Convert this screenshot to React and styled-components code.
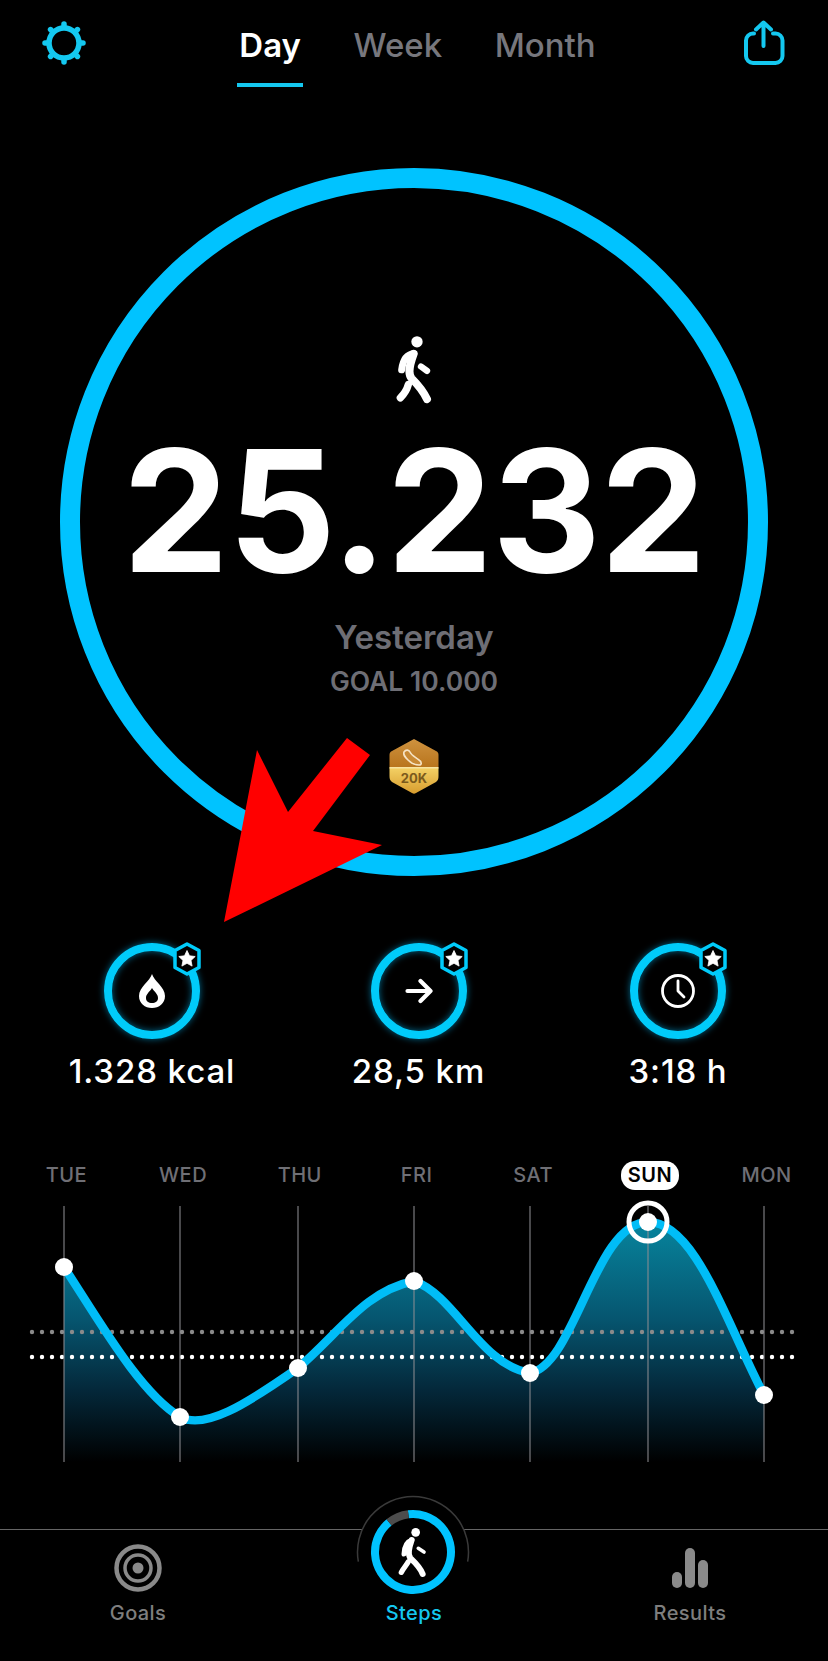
import React from "react";
import styled, { createGlobalStyle } from "styled-components";

const CYAN = "#00c3ff";
const TEAL = "#14c8f0";

const GlobalStyle = createGlobalStyle`
  html, body {
    margin: 0;
    padding: 0;
    background: #000;
  }
  body {
    font-family: Inter, "Liberation Sans", sans-serif;
    color: #fff;
  }
`;

const Page = styled.div`
  position: relative;
  width: 828px;
  height: 1661px;
  background: #000;
  overflow: hidden;
`;

const TopBar = styled.header`
  display: flex;
  align-items: flex-start;
  justify-content: space-between;
  height: 168px;
  box-sizing: border-box;
  padding: 20px 42px 0 42px;
`;

const Tabs = styled.nav`
  display: flex;
  gap: 48.5px;
  margin-left: 5px;
`;

const Tab = styled.div`
  position: relative;
  height: 67px;
  box-sizing: border-box;
  padding: 6px 2px 0;
  font-size: 33px;
  line-height: 38px;
  font-weight: ${(p) => (p.$active ? 600 : 500)};
  color: ${(p) => (p.$active ? "#fff" : "#77777d")};
  border-bottom: 4px solid ${(p) => (p.$active ? TEAL : "transparent")};
`;

const Hero = styled.section`
  width: 708px;
  height: 708px;
  margin: 0 auto;
  box-sizing: border-box;
  border: 20px solid ${CYAN};
  border-radius: 50%;
  display: flex;
  flex-direction: column;
  align-items: center;
  padding-top: 147px;
`;

const StepCount = styled.div`
  margin-top: 12px;
  font-size: 169px;
  line-height: 190px;
  font-weight: 700;
  letter-spacing: -1px;
  color: #fff;
`;

const Caption = styled.div`
  margin-top: 11px;
  font-size: 33px;
  line-height: 40px;
  font-weight: 600;
  color: #6e6e75;
`;

const Goal = styled.div`
  margin-top: 8px;
  font-size: 26.5px;
  line-height: 32px;
  font-weight: 600;
  color: #6e6e75;
`;

const MedalWrap = styled.div`
  margin-top: 41px;
  height: 56px;
`;

const Stats = styled.section`
  display: grid;
  grid-template-columns: 304px 229px 290px;
  margin-top: 67px;
`;

const Stat = styled.div`
  display: flex;
  flex-direction: column;
  align-items: center;
`;

const StatRing = styled.div`
  position: relative;
  width: 96px;
  height: 96px;
  box-sizing: border-box;
  border: 8px solid #00cbfa;
  border-radius: 50%;
  display: flex;
  align-items: center;
  justify-content: center;
  box-shadow: 0 0 7px rgba(0, 190, 255, 0.55), inset 0 0 7px rgba(0, 190, 255, 0.55);
`;

const StarBadge = styled.svg`
  position: absolute;
  top: -9px;
  right: -11px;
  width: 32px;
  height: 34px;
`;

const StatValue = styled.div`
  margin-top: 12px;
  margin-bottom: 1px;
  font-size: 33px;
  line-height: 40px;
  font-weight: 500;
  letter-spacing: 0.9px;
  color: #fff;
  white-space: nowrap;
`;

const DayRow = styled.div`
  display: grid;
  grid-template-columns: repeat(7, 1fr);
  justify-items: center;
  align-items: center;
  height: 29px;
  margin-top: 69px;
  padding: 0 3px 0 8px;
`;

const Day = styled.div`
  font-size: 20px;
  line-height: 29px;
  letter-spacing: 0.5px;
  padding: 0 ${(p) => (p.$active ? "7px" : "0")};
  border-radius: 14px;
  color: ${(p) => (p.$active ? "#000" : "#6f6f75")};
  background: ${(p) => (p.$active ? "#fff" : "transparent")};
  font-weight: ${(p) => (p.$active ? 600 : 500)};
`;

const Chart = styled.svg`
  display: block;
  width: 828px;
  height: 280px;
  margin-top: 5px;
`;

const TabBar = styled.nav`
  display: grid;
  grid-template-columns: repeat(3, 1fr);
  margin-top: 54px;
  border-top: 1px solid #666;
  padding-top: 14px;
`;

const NavItem = styled.div`
  display: flex;
  flex-direction: column;
  align-items: center;
`;

const NavIcon = styled.svg`
  display: block;
  width: 48px;
  height: 48px;
`;

const StepsButton = styled.svg`
  display: block;
  width: 120px;
  height: 104px;
  margin-top: -52px;
  margin-bottom: -4px;
`;

const NavLabel = styled.div`
  margin-top: 9px;
  font-size: 20px;
  line-height: 24px;
  font-weight: 500;
  letter-spacing: 0.4px;
  color: ${(p) => (p.$active ? TEAL : "#7e7e7e")};
`;

const Annotation = styled.svg`
  position: absolute;
  left: 0;
  top: 0;
  width: 828px;
  height: 1661px;
  pointer-events: none;
`;

const GearIcon = () => {
  const teeth = [0, 45, 90, 135, 180, 225, 270, 315];
  return (
    <svg width="44" height="46" viewBox="-22 -23 44 46" fill="none" stroke={TEAL}>
      <circle r="15" strokeWidth="5.5" />
      {teeth.map((a) => (
        <line key={a} x1="0" y1="-16.500" x2="0" y2="-19" strokeWidth="5.500" strokeLinecap="round" transform={`rotate(${a})`} />
      ))}
    </svg>
  );
};

const ShareIcon = () => (
  <svg width="42" height="46" viewBox="0 0 42 46" fill="none" stroke={TEAL} strokeWidth="4" strokeLinecap="round" strokeLinejoin="round">
    <path d="M10 13.500H9a7 7 0 0 0-7 7V36a7 7 0 0 0 7 7H31.500a7 7 0 0 0 7-7V20.500a7 7 0 0 0-7-7H29" />
    <path d="M19.500 26V3M12 9.500L19.500 2.500L27 9.500" />
  </svg>
);

const Walker = () => (
  <svg width="36" height="69" viewBox="585 42 108 206" fill="none" stroke="#fff" strokeLinecap="round" strokeLinejoin="round">
    <circle cx="648" cy="62" r="17" fill="#fff" stroke="none" />
    <path d="M638 98C616 100 606 115 602 146" strokeWidth="21" />
    <path d="M638 98C628 125 618 155 632 172C650 190 668 212 678 234" strokeWidth="24" />
    <path d="M622 190C618 205 610 218 598 230" strokeWidth="22" />
    <path d="M660 136L678 149" strokeWidth="19" />
  </svg>
);

const Medal = () => (
  <svg width="50" height="56" viewBox="0 0 50 56">
    <defs>
      <linearGradient id="medalTop" x1="0" y1="0" x2="0" y2="1">
        <stop offset="0" stopColor="#cf9340" />
        <stop offset="1" stopColor="#b8741c" />
      </linearGradient>
      <linearGradient id="medalBottom" x1="0" y1="0" x2="0" y2="1">
        <stop offset="0" stopColor="#f3d064" />
        <stop offset="1" stopColor="#d79c2e" />
      </linearGradient>
      <clipPath id="medalHex">
        <path d="M25 1L47 13C49 14 49.500 15 49.500 17V38C49.500 41 49 42 47 44L27 55C25.500 56 24.500 56 23 55L3 44C1 42 .5 41 .5 38V17C.5 15 1 14 3 13Z" />
      </clipPath>
    </defs>
    <g clipPath="url(#medalHex)">
      <rect width="50" height="30" fill="url(#medalTop)" />
      <rect y="30" width="50" height="26" fill="url(#medalBottom)" />
      <rect y="29" width="50" height="1.500" fill="#f7e3a0" />
      <path d="M15 14C17 11 20 12 21 14C22 17 26 19 30 22C33 24 33 27 30 27C26 27 22 25 19 22C16 19 14 17 15 14Z" fill="#c98a35" stroke="#f6e3c4" strokeWidth="1.600" />
      <text x="25" y="45" textAnchor="middle" fontSize="13" fontWeight="700" fontFamily="Inter, sans-serif" fill="#7b5a1c">20K</text>
    </g>
  </svg>
);

const Star = () => (
  <StarBadge viewBox="0 0 32 34">
    <path d="M16 2L28 8.500V25.500L16 32L4 25.500V8.500Z" fill="#000" stroke="#00cbfa" strokeWidth="3.500" strokeLinejoin="round" />
    <path d="M16 8.500l2.500 5.300 5.700.7-4.200 3.900 1.100 5.700-5.100-2.800-5.100 2.800 1.100-5.700-4.200-3.900 5.700-.7z" fill="#fff" stroke="#fff" strokeWidth=".8" strokeLinejoin="round" />
  </StarBadge>
);

const FlameIcon = () => (
  <svg width="28" height="36" viewBox="0 0 28 36">
    <path fillRule="evenodd" fill="#fff" d="M14 1C16 8 27 14 27 23C27 30.500 21 35 14 35C7 35 1 30.500 1 23C1 14 12 8 14 1ZM14 15C11.500 19 8 21 8 25C8 28.500 10.500 30 14 30C17.500 30 20 28.500 20 25C20 21 16.500 19 14 15Z" />
  </svg>
);

const ArrowIcon = () => (
  <svg width="28" height="26" viewBox="0 0 28 26" fill="none" stroke="#fff" strokeWidth="4.200" strokeLinecap="round" strokeLinejoin="round">
    <path d="M2.500 13H25M15.500 3L25.500 13L15.500 23" />
  </svg>
);

const ClockIcon = () => (
  <svg width="34" height="34" viewBox="0 0 34 34" fill="none" stroke="#fff" strokeWidth="2.800" strokeLinecap="round" strokeLinejoin="round">
    <circle cx="17" cy="17" r="15.500" />
    <path d="M17 7V17L23 23" />
  </svg>
);

const DAYS = ["TUE", "WED", "THU", "FRI", "SAT", "SUN", "MON"];

// x/y of each day in page coordinates, the chart's viewBox starts at y=1195
const POINTS = [
  [64, 1267],
  [180, 1417],
  [298, 1368],
  [414, 1281],
  [530, 1373],
  [648, 1222],
  [764, 1395],
];

const CURVE =
  "M64 1267C100 1322 140 1393 180 1417C205 1430 245 1405 298 1368C340 1332 365 1291 414 1281C455 1295 480 1365 530 1373C575 1365 595 1222 648 1222C695 1222 725 1320 764 1395";

const StepsChart = () => (
  <Chart viewBox="0 1195 828 280">
    <defs>
      <linearGradient id="areaFill" gradientUnits="userSpaceOnUse" x1="0" y1="1222" x2="0" y2="1462">
        <stop offset="0" stopColor="#07849d" />
        <stop offset="0.4" stopColor="#065670" />
        <stop offset="0.7" stopColor="#04283a" />
        <stop offset="1" stopColor="#000" />
      </linearGradient>
    </defs>
    <path d={`${CURVE}V1462H64Z`} fill="url(#areaFill)" />
    <line x1="32" x2="796" y1="1332" y2="1332" stroke="#8a8a8a" strokeWidth="4.400" strokeDasharray="0 10" strokeLinecap="round" />
    <line x1="32" x2="796" y1="1357" y2="1357" stroke="#fff" strokeWidth="4.400" strokeDasharray="0 10" strokeLinecap="round" />
    {POINTS.map(([x]) => (
      <line key={x} x1={x} x2={x} y1="1206" y2="1462" stroke="#8d8d92" strokeOpacity="0.65" strokeWidth="1.600" />
    ))}
    <path d={CURVE} fill="none" stroke="#00bdf7" strokeWidth="8.500" />
    {POINTS.map(([x, y]) => (
      <circle key={x} cx={x} cy={y} r="9" fill="#fff" />
    ))}
    <circle cx="648" cy="1222" r="19" fill="none" stroke="#fff" strokeWidth="5" />
  </Chart>
);

const GoalsIcon = () => (
  <NavIcon viewBox="0 0 48 48" fill="none" stroke="#8a8a8a">
    <circle cx="24" cy="24" r="21.500" strokeWidth="4.500" />
    <circle cx="24" cy="24" r="13" strokeWidth="3.500" />
    <circle cx="24" cy="24" r="5.500" fill="#8a8a8a" stroke="none" />
  </NavIcon>
);

const ResultsIcon = () => (
  <NavIcon viewBox="0 0 48 48" fill="#8a8a8a">
    <rect x="6" y="28" width="10" height="16" rx="5" />
    <rect x="19" y="4" width="10" height="40" rx="5" />
    <rect x="32" y="16" width="10" height="28" rx="5" />
  </NavIcon>
);

// ring angles are measured clockwise from 12 o'clock
const polar = (r, deg) => {
  const rad = (deg * Math.PI) / 180;
  return [59 + r * Math.sin(rad), 60 - r * Math.cos(rad)];
};

const arc = (r, from, to) => {
  const [x1, y1] = polar(r, from);
  const [x2, y2] = polar(r, to);
  const large = to - from > 180 ? 1 : 0;
  return `M${x1} ${y1}A${r} ${r} 0 ${large} 1 ${x2} ${y2}`;
};

const StepsIcon = () => (
  <StepsButton viewBox="0 0 120 104" fill="none">
    <path d={arc(55.5, -100, 100)} fill="#000" stroke="#3a3a3a" strokeWidth="1.500" />
    <circle cx="59" cy="60" r="46" fill="#000" />
    <path d={arc(38, -7, 321)} stroke={CYAN} strokeWidth="8" />
    <path d={arc(38, 321, 353)} stroke="#4d4d4d" strokeWidth="8" />
    <g transform="translate(59 60) scale(0.3333) translate(-1059 -216)" stroke="#fff" strokeLinecap="round" strokeLinejoin="round">
      <circle cx="1067" cy="157" r="13" fill="#fff" stroke="none" />
      <path d="M1055 180C1040 185 1033 195 1032 222" strokeWidth="15" />
      <path d="M1055 180C1048 200 1042 225 1052 235C1068 250 1082 265 1088 282" strokeWidth="18" />
      <path d="M1045 245C1040 255 1030 265 1024 277" strokeWidth="16" />
      <path d="M1075 205L1092 216" strokeWidth="11" />
    </g>
  </StepsButton>
);

export default function App() {
  return (
    <Page>
      <GlobalStyle />
      <TopBar>
        <GearIcon />
        <Tabs>
          <Tab $active>Day</Tab>
          <Tab>Week</Tab>
          <Tab>Month</Tab>
        </Tabs>
        <ShareIcon />
      </TopBar>

      <Hero>
        <Walker />
        <StepCount>25.232</StepCount>
        <Caption>Yesterday</Caption>
        <Goal>GOAL 10.000</Goal>
        <MedalWrap>
          <Medal />
        </MedalWrap>
      </Hero>

      <Stats>
        <Stat>
          <StatRing>
            <FlameIcon />
            <Star />
          </StatRing>
          <StatValue>1.328 kcal</StatValue>
        </Stat>
        <Stat>
          <StatRing>
            <ArrowIcon />
            <Star />
          </StatRing>
          <StatValue>28,5 km</StatValue>
        </Stat>
        <Stat>
          <StatRing>
            <ClockIcon />
            <Star />
          </StatRing>
          <StatValue>3:18 h</StatValue>
        </Stat>
      </Stats>

      <DayRow>
        {DAYS.map((d) => (
          <Day key={d} $active={d === "SUN"}>
            {d}
          </Day>
        ))}
      </DayRow>
      <StepsChart />

      <TabBar>
        <NavItem>
          <GoalsIcon />
          <NavLabel>Goals</NavLabel>
        </NavItem>
        <NavItem>
          <StepsIcon />
          <NavLabel $active>Steps</NavLabel>
        </NavItem>
        <NavItem>
          <ResultsIcon />
          <NavLabel>Results</NavLabel>
        </NavItem>
      </TabBar>

      <Annotation viewBox="0 0 828 1661">
        <polygon points="224,922 257,750 288,812 347,738 370,755 313,831 382,845" fill="#ff0000" />
      </Annotation>
    </Page>
  );
}
